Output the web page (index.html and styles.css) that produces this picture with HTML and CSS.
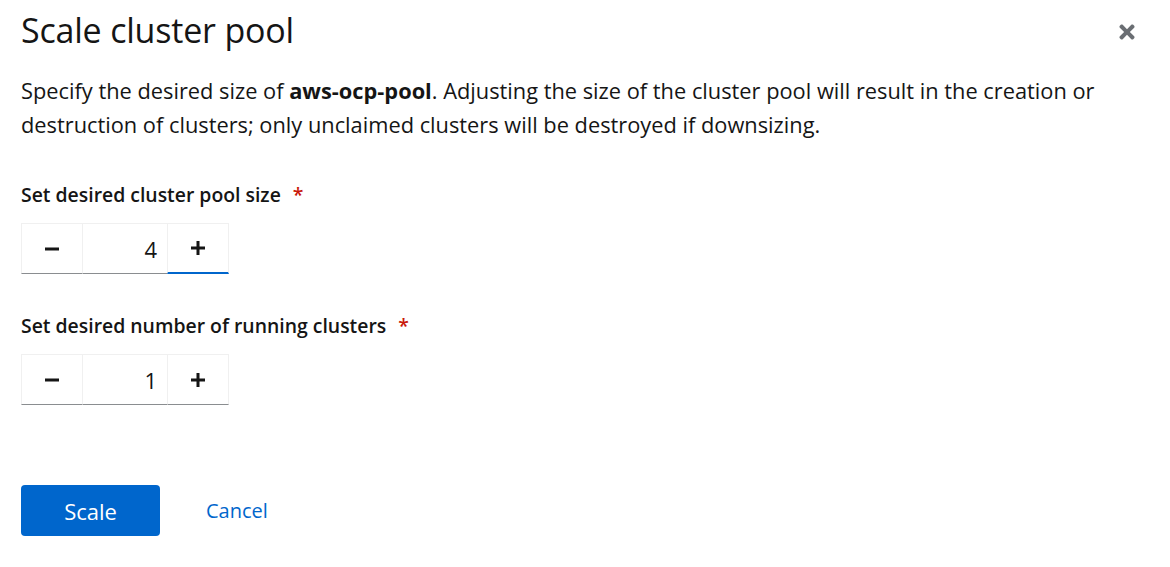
FILE: index.html
```html
<!DOCTYPE html>
<html>
<head>
<meta charset="utf-8">
<link rel="stylesheet" href="styles.css">
</head>
<body>
<div class="modal">
  <header class="modal-header">
    <h1 class="title">Scale cluster pool</h1>
    <button class="close" aria-label="Close">
      <svg viewBox="0 0 352 512" width="16" height="22"><path fill="#6a6e73" d="M242.72 256l100.07-100.07c12.28-12.28 12.280-32.19 0-44.48l-22.24-22.24c-12.28-12.28-32.19-12.28-44.48 0L176 189.28 75.93 89.21c-12.28-12.28-32.19-12.28-44.48 0L9.21 111.45c-12.28 12.28-12.28 32.19 0 44.48L109.28 256 9.21 356.07c-12.28 12.28-12.28 32.19 0 44.48l22.24 22.24c12.28 12.28 32.2 12.28 44.48 0L176 322.72l100.07 100.07c12.28 12.28 32.2 12.28 44.48 0l22.24-22.24c12.28-12.28 12.28-32.19 0-44.48L242.72 256z"/></svg>
    </button>
  </header>
  <p class="desc">Specify the desired size of <strong>aws-ocp-pool</strong>. Adjusting the size of the cluster pool will result in the creation or destruction of clusters; only unclaimed clusters will be destroyed if downsizing.</p>

  <div class="field">
    <label class="label">Set desired cluster pool size <span class="req">*</span></label>
    <div class="numinput">
      <button class="step"><svg viewBox="0 0 14 14" width="14" height="14"><rect x="0" y="5.5" width="14" height="3" fill="#151515"/></svg></button>
      <div class="value">4</div>
      <button class="step focused"><svg viewBox="0 0 14 14" width="14" height="14"><rect x="0" y="5.5" width="14" height="3" fill="#151515"/><rect x="5.5" y="0" width="3" height="14" fill="#151515"/></svg></button>
    </div>
  </div>

  <div class="field">
    <label class="label">Set desired number of running clusters <span class="req">*</span></label>
    <div class="numinput">
      <button class="step"><svg viewBox="0 0 14 14" width="14" height="14"><rect x="0" y="5.5" width="14" height="3" fill="#151515"/></svg></button>
      <div class="value">1</div>
      <button class="step"><svg viewBox="0 0 14 14" width="14" height="14"><rect x="0" y="5.5" width="14" height="3" fill="#151515"/><rect x="5.5" y="0" width="3" height="14" fill="#151515"/></svg></button>
    </div>
  </div>

  <footer class="actions">
    <button class="btn-primary">Scale</button>
    <button class="btn-link">Cancel</button>
  </footer>
</div>
</body>
</html>
```

FILE: styles.css
```css
html, body {
  margin: 0;
  padding: 0;
  background: #ffffff;
}
body {
  font-family: "Open Sans", "Noto Sans", sans-serif;
  color: #151515;
}
.modal {
  padding: 0 21px;
  width: 1114px;
}
.modal-header {
  display: flex;
  justify-content: space-between;
  align-items: flex-start;
  height: 70px;
}
.title {
  margin: 7px 0 0 0;
  font-family: "Open Sans", sans-serif;
  font-weight: 500;
  font-size: 34px;
  line-height: 46px;
  letter-spacing: -0.2px;
}
.close {
  border: 0;
  background: none;
  padding: 0;
  margin: 21px 0 0 0;
  width: 16px;
  height: 22px;
  display: flex;
}
.desc {
  margin: 4px 0 0 0;
  font-size: 21.8px;
  line-height: 34px;
  width: 1100px;
}
.desc strong {
  font-weight: 700;
}
.desc + .field {
  margin-top: 40px;
}
.field + .field {
  margin-top: 39px;
}
.label {
  display: block;
  font-size: 19.4px;
  font-weight: 600;
  line-height: 26px;
}
.req {
  color: #c9190b;
  margin-left: 7px;
}
.numinput {
  margin-top: 15px;
  display: flex;
  height: 51px;
}
.step {
  box-sizing: border-box;
  width: 62px;
  height: 51px;
  background: #fff;
  border: 1px solid #f0f0f0;
  border-bottom: 1px solid #8a8d90;
  display: flex;
  align-items: center;
  justify-content: center;
  padding: 0;
  margin: 0;
}
.step.focused {
  border-bottom: 2px solid #0066cc;
}
.value {
  width: 84px;
  height: 51px;
  box-sizing: border-box;
  border-top: 1px solid #f0f0f0;
  border-bottom: 1px solid #8a8d90;
  display: flex;
  align-items: center;
  justify-content: flex-end;
  padding-right: 10px;
  font-size: 22px;
  color: #151515;
}
.actions {
  margin-top: 80px;
  display: flex;
  align-items: center;
}
.btn-primary {
  width: 139px;
  height: 51px;
  background: #0066cc;
  color: #fff;
  border: 0;
  border-radius: 4px;
  font-family: "Open Sans", sans-serif;
  font-size: 22px;
  padding: 0;
}
.btn-link {
  margin-left: 30px;
  background: none;
  border: 0;
  color: #0066cc;
  font-family: "Open Sans", sans-serif;
  font-size: 20px;
  padding: 0 16px;
}
```
